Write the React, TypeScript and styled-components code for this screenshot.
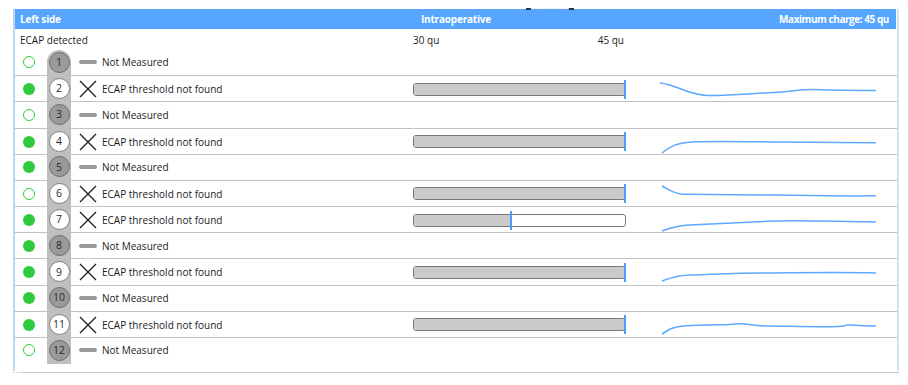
import React from "react";
import styled, { createGlobalStyle } from "styled-components";

const GlobalStyle = createGlobalStyle`
  html, body { margin: 0; padding: 0; background: #ffffff; }
  body { font-family: "Open Sans", "Noto Sans", "Liberation Sans", sans-serif; color: #1b1b1b; }
`;

const Page = styled.div`
  padding: 9px 0 0 13px;
  width: 886px;
`;

const Frame = styled.div`
  border-left: 2px solid #bcd6f6;
  border-right: 2px solid #cfe2fa;
  height: 362px;
  box-sizing: border-box;
  display: flex;
  flex-direction: column;
`;

const BottomRule = styled.div`
  margin-top: 1px;
  height: 1px;
  background: linear-gradient(to right, #e2e2e2 0, #e2e2e2 9px, #c6c6c6 9px);
`;

const Header = styled.div`
  position: relative;
  height: 20px;
  background: #56a5ff;
  color: #ffffff;
  font-weight: 700;
  font-size: 10px;
  letter-spacing: -0.2px;
  display: grid;
  grid-template-columns: 401px 1fr auto;
  align-items: center;
  padding: 0 7px 0 5px;
  margin-right: 1px;
`;

const HeaderCell = styled.span<{ $tight?: boolean }>`
  white-space: nowrap;
  letter-spacing: ${(p) => (p.$tight ? "-0.45px" : "inherit")};
`;

const Grip = styled.div`
  position: absolute;
  left: 511px;
  top: -1px;
  width: 48px;
  height: 2px;
  display: flex;
  align-items: center;
  justify-content: space-between;
  background: repeating-linear-gradient(to right, #d7d7d7 0 1px, transparent 1px 3px);
  background-size: 100% 1px;
  background-repeat: no-repeat;
  background-position: 0 0;
`;

const GripKnob = styled.span`
  width: 5px;
  height: 2px;
  background: #2b3440;
`;

const LegendRow = styled.div`
  height: 20px;
  display: grid;
  grid-template-columns: 393px 211px;
  align-items: center;
  font-size: 10px;
  padding: 1px 0 0 5px;
  box-sizing: border-box;
`;

const ScaleLabels = styled.div`
  display: flex;
  justify-content: space-between;
`;

const Rows = styled.div`
  display: flex;
  flex-direction: column;
`;

const Row = styled.div`
  height: 26.18px;
  display: grid;
  grid-template-columns: 32px 24px 342px 214px 1fr;
  font-size: 10px;
`;

const Cell = styled.div<{ $first?: boolean }>`
  border-top: ${(p) => (p.$first ? "none" : "1px solid #c4c4c4")};
  display: flex;
  align-items: center;
  min-width: 0;
  box-sizing: border-box;
`;

const StatusCell = styled(Cell)`
  padding-left: 8px;
`;

const Dot = styled.span<{ $filled: boolean }>`
  width: 12px;
  height: 12px;
  border-radius: 50%;
  box-sizing: border-box;
  background: ${(p) => (p.$filled ? "#2ecb3f" : "#ffffff")};
  border: ${(p) => (p.$filled ? "none" : "1.5px solid #2ecb3f")};
`;

const Track = styled.div<{ $first?: boolean; $last?: boolean }>`
  background: #bfbfbf;
  display: flex;
  align-items: center;
  justify-content: center;
  margin-top: ${(p) => (p.$first ? "1px" : "0")};
  margin-bottom: ${(p) => (p.$last ? "-1px" : "0")};
  border-radius: ${(p) => (p.$first ? "12px 12px 0 0" : "0")};
`;

const Electrode = styled.span<{ $measured: boolean }>`
  width: 21px;
  height: 21px;
  border-radius: 50%;
  box-sizing: border-box;
  background: ${(p) => (p.$measured ? "#ffffff" : "#9a9a9a")};
  border: 1px solid ${(p) => (p.$measured ? "#808080" : "#6c6c6c")};
  color: #2a2a2a;
  font-size: 10.5px;
  display: flex;
  align-items: center;
  justify-content: center;
  line-height: 1;
`;

const LabelCell = styled(Cell)`
  padding-left: 8px;
  gap: 5px;
  white-space: nowrap;
`;

const IconBox = styled.span`
  width: 18px;
  height: 18px;
  display: flex;
  align-items: center;
  justify-content: center;
  flex: none;
`;

const Dash = styled.span`
  width: 18px;
  height: 4px;
  border-radius: 2px;
  background: #9a9a9a;
`;

const BarCell = styled(Cell)``;

const BarTrack = styled.div`
  position: relative;
  width: 213px;
  height: 13px;
  box-sizing: border-box;
  border: 1px solid #777777;
  border-radius: 3px;
  background: #ffffff;
`;

const BarFill = styled.div`
  height: 100%;
  background: #cacaca;
  border-radius: 2px 0 0 2px;
`;

const Marker = styled.span`
  position: absolute;
  top: -4px;
  bottom: -4px;
  width: 2px;
  margin-left: -1px;
  background: #4a9dff;
`;

const SparkCell = styled(Cell)`
  padding-left: 35px;
`;

const Spark = styled.svg`
  display: block;
  overflow: visible;
`;

type RowData = {
  n: number;
  filled: boolean;
  measured: boolean;
  value?: number;
  spark?: string;
};

const rows: RowData[] = [
  { n: 1, filled: false, measured: false },
  {
    n: 2,
    filled: true,
    measured: true,
    value: 1,
    spark: "M-2 7 C 14 8.5, 26 19, 45 19.5 S 90 17.5, 112 16.5 S 138 13, 152 13.5 S 195 14.5, 214 14.5",
  },
  { n: 3, filled: false, measured: false },
  {
    n: 4,
    filled: true,
    measured: true,
    value: 1,
    spark: "M0 24 C 7 18, 14 14, 30 13 S 80 12.5, 120 13 S 180 13.5, 214 13.8",
  },
  { n: 5, filled: true, measured: false },
  {
    n: 6,
    filled: false,
    measured: true,
    value: 1,
    spark: "M0 5 C 8 9, 12 13, 22 13.3 S 100 13.8, 150 14.5 S 200 15, 214 14.8",
  },
  {
    n: 7,
    filled: true,
    measured: true,
    value: 0.46,
    spark: "M0 24 C 8 21, 15 18.5, 28 18 S 70 16, 104 14.3 S 180 15, 214 15",
  },
  { n: 8, filled: true, measured: false },
  {
    n: 9,
    filled: true,
    measured: true,
    value: 1,
    spark: "M0 22 C 10 18, 18 16, 30 16 S 70 14, 100 14 S 170 13, 214 14",
  },
  { n: 10, filled: true, measured: false },
  {
    n: 11,
    filled: true,
    measured: true,
    value: 1,
    spark:
      "M0 22 C 8 17, 12 14.5, 22 14 S 45 12.5, 57 12.7 S 70 11.5, 78 11.8 S 95 14, 105 14 S 150 14.8, 170 14.7 S 180 13, 186 13 S 205 14, 214 14",
  },
  { n: 12, filled: false, measured: false },
];

const CrossIcon = () => (
  <svg width="18" height="18" viewBox="0 0 18 18">
    <path d="M1 1 L17 17 M17 1 L1 17" stroke="#1e1e1e" strokeWidth="1.3" fill="none" />
  </svg>
);

export default function App() {
  return (
    <>
      <GlobalStyle />
      <Page>
        <Frame>
          <Header>
            <Grip>
              <GripKnob />
              <GripKnob />
            </Grip>
            <HeaderCell>Left side</HeaderCell>
            <HeaderCell>Intraoperative</HeaderCell>
            <HeaderCell $tight>Maximum charge: 45 qu</HeaderCell>
          </Header>
          <LegendRow>
            <span>ECAP detected</span>
            <ScaleLabels>
              <span>30 qu</span>
              <span>45 qu</span>
            </ScaleLabels>
          </LegendRow>
          <Rows>
            {rows.map((r, i) => {
              const first = i === 0;
              const last = i === rows.length - 1;
              return (
                <Row key={r.n}>
                  <StatusCell $first={first}>
                    <Dot $filled={r.filled} />
                  </StatusCell>
                  <Track $first={first} $last={last}>
                    <Electrode $measured={r.measured}>{r.n}</Electrode>
                  </Track>
                  <LabelCell $first={first}>
                    <IconBox>{r.measured ? <CrossIcon /> : <Dash />}</IconBox>
                    <span>{r.measured ? "ECAP threshold not found" : "Not Measured"}</span>
                  </LabelCell>
                  <BarCell $first={first}>
                    {r.value !== undefined && (
                      <BarTrack>
                        <BarFill style={{ width: `${r.value * 100}%` }} />
                        <Marker style={{ left: `${r.value * 100}%` }} />
                      </BarTrack>
                    )}
                  </BarCell>
                  <SparkCell $first={first}>
                    {r.spark && (
                      <Spark width="216" height="26" viewBox="0 0 216 26">
                        <path d={r.spark} stroke="#5aa8ff" strokeWidth="1.5" fill="none" />
                      </Spark>
                    )}
                  </SparkCell>
                </Row>
              );
            })}
          </Rows>
        </Frame>
        <BottomRule />
      </Page>
    </>
  );
}
